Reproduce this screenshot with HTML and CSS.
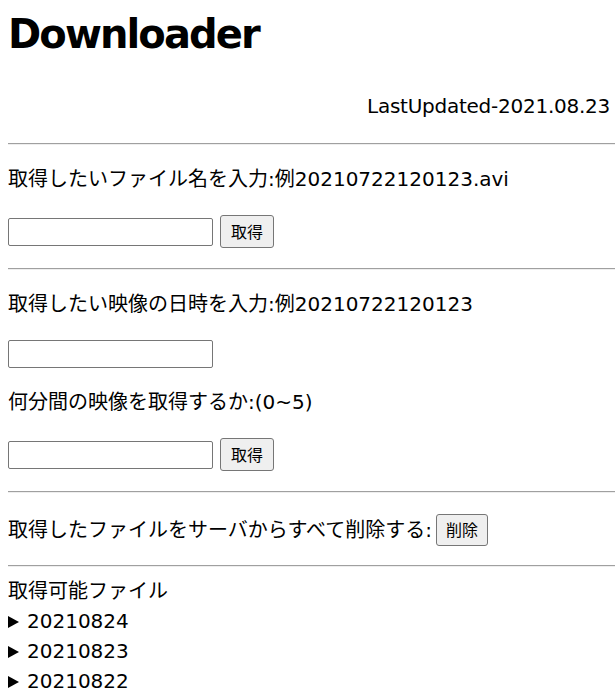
FILE: index.html
```html
<!DOCTYPE html>
<html lang="ja">
<head>
<meta charset="utf-8">
<title>Downloader</title>
<link rel="stylesheet" href="styles.css">
</head>
<body>
<h1 class="title">Downloader</h1>
<p class="updated">LastUpdated-2021.08.23</p>
<hr class="rule rule-top">

<section class="block">
  <p class="label">取得したいファイル名を入力:例20210722120123.avi</p>
  <div class="row row-btn">
    <input class="field" type="text">
    <button class="btn" type="button">取得</button>
  </div>
</section>
<hr class="rule">

<section class="block">
  <p class="label">取得したい映像の日時を入力:例20210722120123</p>
  <div class="row row-plain">
    <input class="field" type="text">
  </div>
  <p class="label label-after-field">何分間の映像を取得するか:(0~5)</p>
  <div class="row row-btn">
    <input class="field" type="text">
    <button class="btn" type="button">取得</button>
  </div>
</section>
<hr class="rule">

<section class="block">
  <div class="row row-delete">
    <span class="label-inline">取得したファイルをサーバからすべて削除する:</span>
    <button class="btn btn-tight" type="button">削除</button>
  </div>
</section>
<hr class="rule">

<div class="files">
  <div class="files-title">取得可能ファイル</div>
  <details class="day"><summary class="day-summary"><span class="marker"></span>20210824</summary></details>
  <details class="day"><summary class="day-summary"><span class="marker"></span>20210823</summary></details>
  <details class="day"><summary class="day-summary"><span class="marker"></span>20210822</summary></details>
</div>
</body>
</html>
```

FILE: styles.css
```css
html, body {
  background: #ffffff;
}

body {
  margin: 0;
  padding: 0 0 0 8px;
  color: #000000;
  font-family: "DejaVu Sans", "Noto Sans CJK JP", sans-serif;
  font-size: 20px;
  line-height: 30px;
  overflow: hidden;
}

.title {
  margin: 10px 0 0;
  font-size: 40px;
  line-height: 48px;
  font-weight: bold;
  letter-spacing: -1.9px;
}

.updated {
  margin: 33px 0 0;
  padding-right: 5px;
  text-align: right;
  letter-spacing: -0.25px;
}

.rule {
  margin: 19px 0 0;
  height: 0;
  border: 0;
  border-top: 1px solid #a0a0a0;
  border-bottom: 1px solid #eeeeee;
}

.rule-top {
  margin-top: 22px;
}

.block {
  margin: 0;
}

.label {
  margin: 19px 0 0;
}

.label-after-field {
  margin-top: 19px;
}

.row {
  display: flex;
  align-items: center;
}

.row-btn {
  margin-top: 20px;
  height: 35px;
  gap: 7px;
}

.row-plain {
  margin-top: 21px;
  height: 28px;
}

.row-delete {
  margin-top: 20px;
  height: 33px;
  gap: 4px;
}

.field {
  box-sizing: border-box;
  width: 205px;
  height: 28px;
  margin: 0;
  padding: 0 3px;
  border: 1px solid #767676;
  border-radius: 2px;
  background: #ffffff;
  font-family: inherit;
  font-size: 16px;
}

.btn {
  box-sizing: border-box;
  height: 33px;
  margin: 0;
  padding: 0 10px 2px;
  border: 1px solid #767676;
  border-radius: 3px;
  background: #efefef;
  color: #000000;
  font-family: "Noto Sans CJK JP", sans-serif;
  font-size: 16px;
  line-height: 20px;
}

.btn-tight {
  height: 32px;
  padding: 0 9px 2px;
}

.files {
  margin-top: 9px;
}

.files-title {
  line-height: 30px;
}

.day {
  margin: 0;
}

.day-summary {
  display: flex;
  align-items: center;
  list-style: none;
  line-height: 30px;
}

.day-summary::-webkit-details-marker {
  display: none;
}

.marker {
  width: 0;
  height: 0;
  margin: 2px 8px 0 0;
  border-left: 11px solid #000000;
  border-top: 6px solid transparent;
  border-bottom: 6px solid transparent;
}
```
